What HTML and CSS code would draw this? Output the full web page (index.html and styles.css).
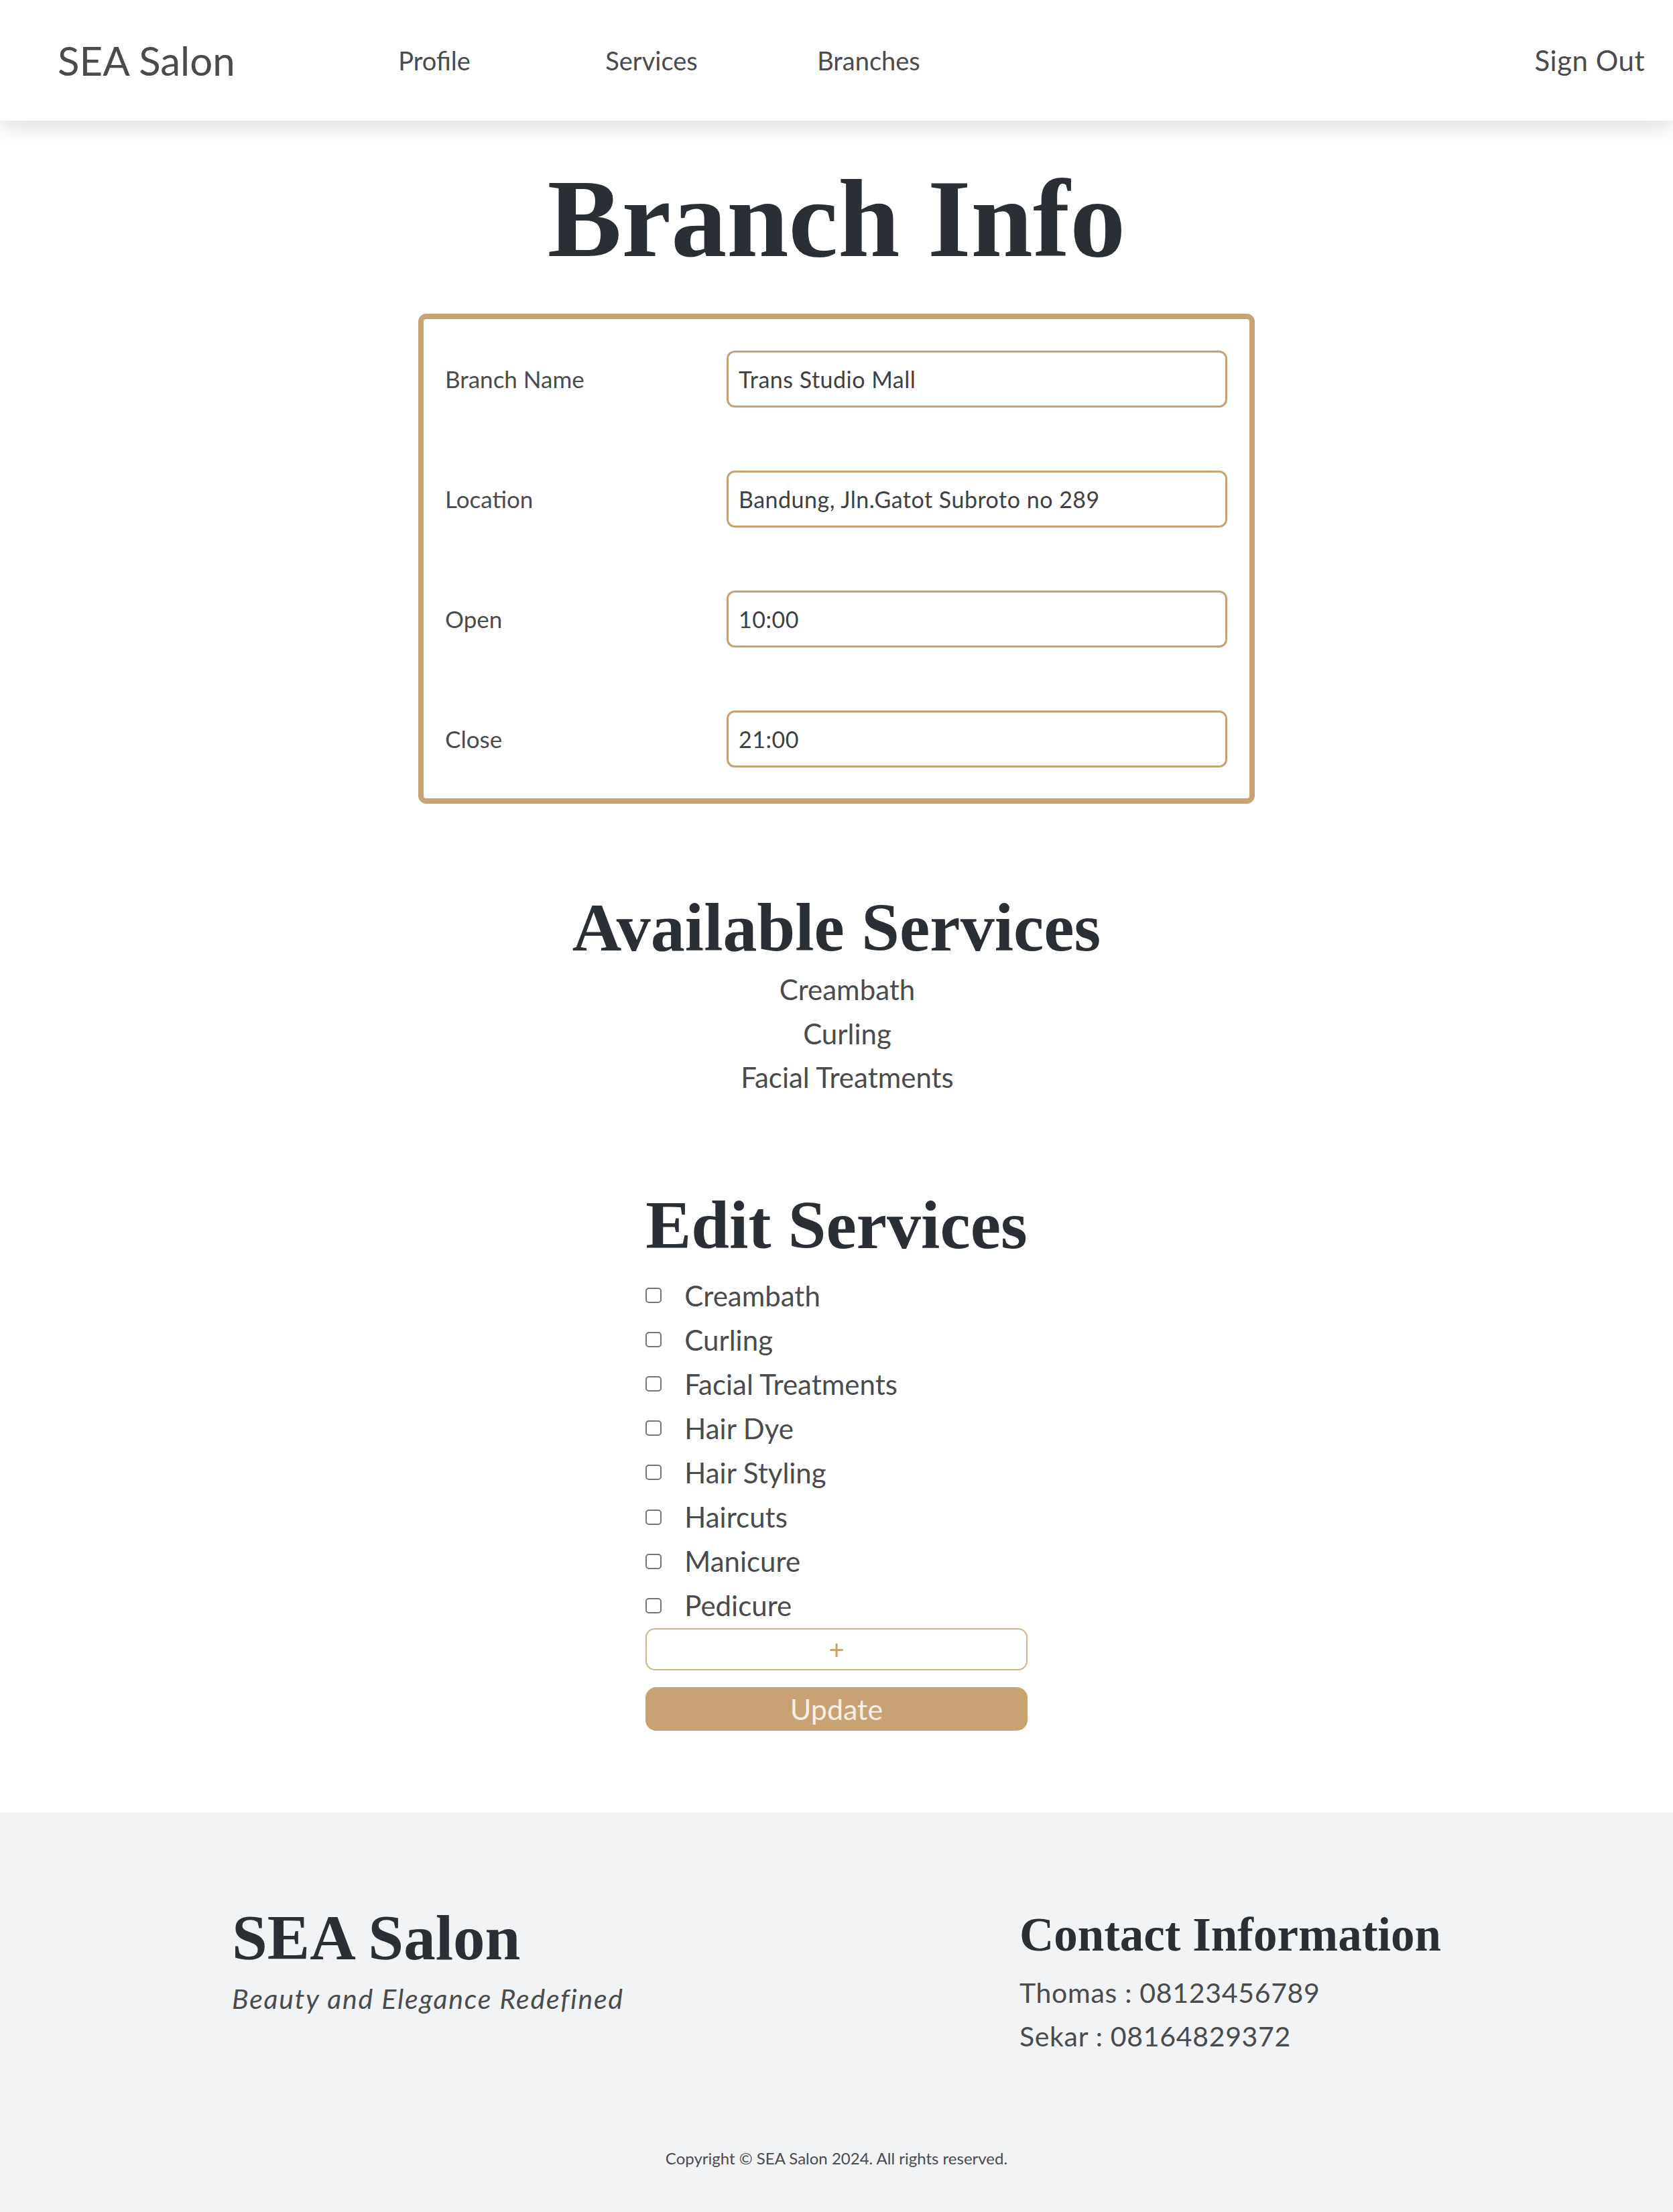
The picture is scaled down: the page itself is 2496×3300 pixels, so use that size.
FILE: index.html
```html
<!DOCTYPE html>
<html lang="en">
<head>
<meta charset="utf-8">
<title>SEA Salon - Branch Info</title>
<link rel="stylesheet" href="styles.css">
</head>
<body>
<header class="nav">
  <div class="nav-logo">SEA Salon</div>
  <nav class="nav-links">
    <a class="nav-link" href="#">Profile</a>
    <a class="nav-link" href="#">Services</a>
    <a class="nav-link" href="#">Branches</a>
  </nav>
  <a class="nav-signout" href="#">Sign Out</a>
</header>

<main class="main">
  <h1 class="page-title">Branch Info</h1>

  <form class="info-card">
    <div class="info-row">
      <label class="info-label">Branch Name</label>
      <input class="info-input" type="text" value="Trans Studio Mall">
    </div>
    <div class="info-row">
      <label class="info-label">Location</label>
      <input class="info-input" type="text" value="Bandung, Jln.Gatot Subroto no 289">
    </div>
    <div class="info-row">
      <label class="info-label">Open</label>
      <input class="info-input" type="text" value="10:00">
    </div>
    <div class="info-row">
      <label class="info-label">Close</label>
      <input class="info-input" type="text" value="21:00">
    </div>
  </form>

  <section class="available">
    <h2 class="section-title">Available Services</h2>
    <ul class="available-list">
      <li>Creambath</li>
      <li>Curling</li>
      <li>Facial Treatments</li>
    </ul>
  </section>

  <section class="edit">
    <div class="edit-inner">
      <h2 class="section-title">Edit Services</h2>
      <ul class="edit-list">
        <li class="edit-item"><input class="edit-check" type="checkbox"><span>Creambath</span></li>
        <li class="edit-item"><input class="edit-check" type="checkbox"><span>Curling</span></li>
        <li class="edit-item"><input class="edit-check" type="checkbox"><span>Facial Treatments</span></li>
        <li class="edit-item"><input class="edit-check" type="checkbox"><span>Hair Dye</span></li>
        <li class="edit-item"><input class="edit-check" type="checkbox"><span>Hair Styling</span></li>
        <li class="edit-item"><input class="edit-check" type="checkbox"><span>Haircuts</span></li>
        <li class="edit-item"><input class="edit-check" type="checkbox"><span>Manicure</span></li>
        <li class="edit-item"><input class="edit-check" type="checkbox"><span>Pedicure</span></li>
      </ul>
      <button class="add-btn" type="button">+</button>
      <button class="update-btn" type="button">Update</button>
    </div>
  </section>
</main>

<footer class="footer">
  <div class="footer-top">
    <div class="footer-brand">
      <div class="footer-logo">SEA Salon</div>
      <div class="footer-tagline">Beauty and Elegance Redefined</div>
    </div>
    <div class="footer-contact">
      <div class="footer-contact-title">Contact Information</div>
      <div class="footer-contact-line">Thomas : 08123456789</div>
      <div class="footer-contact-line">Sekar : 08164829372</div>
    </div>
  </div>
  <div class="footer-copy">Copyright © SEA Salon 2024. All rights reserved.</div>
</footer>
</body>
</html>
```

FILE: styles.css
```css
* {
  box-sizing: border-box;
}

html, body {
  margin: 0;
  padding: 0;
}

body {
  background: #ffffff;
  font-family: "Lato", "Open Sans", sans-serif;
  color: #4a4b4d;
}

/* NAV */
.nav {
  height: 180px;
  display: flex;
  align-items: center;
  padding: 0 42px 0 86px;
  background: #ffffff;
  box-shadow: 0 10px 30px rgba(0, 0, 0, 0.13);
  position: relative;
  z-index: 2;
}

.nav-logo {
  width: 400px;
  flex: none;
  font-size: 60px;
  color: #4a4b4d;
}

.nav-links {
  display: flex;
}

.nav-link {
  width: 324px;
  text-align: center;
  font-size: 38px;
  color: #4a4b4d;
  text-decoration: none;
}

.nav-signout {
  margin-left: auto;
  font-size: 42px;
  letter-spacing: 0.5px;
  color: #4a4b4d;
  text-decoration: none;
}

/* MAIN */
.main {
  display: flex;
  flex-direction: column;
  align-items: center;
}

.page-title {
  margin: 63px 0 59px;
  font-family: "Liberation Serif", serif;
  font-weight: 700;
  font-size: 166px;
  line-height: 166px;
  color: #2a2f35;
}

.info-card {
  width: 50%;
  border: 8px solid #c8a273;
  border-radius: 12px;
  padding: 47px 33px 46px 32px;
  display: grid;
  row-gap: 94px;
}

.info-row {
  display: grid;
  grid-template-columns: 420px 1fr;
  align-items: center;
}

.info-label {
  font-size: 35px;
  color: #4a4b4d;
  position: relative;
  top: -1px;
}

.info-input {
  height: 85px;
  width: 100%;
  border: 3px solid #c8a273;
  border-radius: 12px;
  padding: 0 15px;
  font-family: "Lato", "Open Sans", sans-serif;
  font-size: 34px;
  letter-spacing: 0.5px;
  color: #3f4043;
  background: #ffffff;
  outline: none;
}

.section-title {
  margin: 0;
  font-family: "Liberation Serif", serif;
  font-weight: 700;
  font-size: 102px;
  line-height: 102px;
  color: #2a2f35;
  text-align: center;
}

.available {
  margin-top: 134px;
  display: flex;
  flex-direction: column;
  align-items: center;
}

.available-list {
  list-style: none;
  margin: 9px 0 0;
  padding: 0 0 0 32px;
  text-align: center;
  font-size: 42px;
  line-height: 65.5px;
}

.edit {
  margin-top: 136px;
}

.edit-inner {
  display: flex;
  flex-direction: column;
  width: max-content;
}

.edit-list {
  list-style: none;
  margin: 21px 0 0;
  padding: 0;
}

.edit-item {
  display: flex;
  align-items: center;
  height: 66.1px;
  font-size: 42px;
}

.edit-check {
  appearance: none;
  -webkit-appearance: none;
  width: 24px;
  height: 23px;
  margin: 0 34px 0 0;
  border: 2px solid #767676;
  border-radius: 5px;
  background: #ffffff;
}

.add-btn {
  margin-top: 1px;
  height: 63px;
  border: 2px solid #d2b48c;
  border-radius: 14px;
  background: #ffffff;
  color: #c8a273;
  font-family: "Lato", "Open Sans", sans-serif;
  font-size: 40px;
  line-height: 1;
  padding: 0;
}

.update-btn {
  margin-top: 25px;
  height: 65px;
  border: none;
  border-radius: 16px;
  background: #c8a273;
  color: #f7efe6;
  font-family: "Lato", "Open Sans", sans-serif;
  font-size: 43px;
  padding: 0;
}

/* FOOTER */
.footer {
  margin-top: 122px;
  background: #f2f3f5;
  padding: 140px 346px 62px;
}

.footer-top {
  display: flex;
  justify-content: space-between;
  align-items: flex-start;
}

.footer-logo {
  font-family: "Liberation Serif", serif;
  font-weight: 700;
  font-size: 95px;
  line-height: 95px;
  color: #2a2f35;
}

.footer-tagline {
  margin-top: 13px;
  font-style: italic;
  font-size: 41px;
  letter-spacing: 1.8px;
  line-height: 60px;
  color: #4a4b4d;
}

.footer-contact {
  margin-top: 7px;
}

.footer-contact-title {
  font-family: "Liberation Serif", serif;
  font-weight: 700;
  font-size: 71px;
  line-height: 71px;
  color: #2a2f35;
  margin-bottom: 18px;
}

.footer-contact-line {
  font-size: 41px;
  letter-spacing: 0.7px;
  line-height: 65px;
  color: #4a4b4d;
}

.footer-copy {
  margin-top: 133px;
  text-align: center;
  font-size: 24px;
  line-height: 34.5px;
  color: #4a4b4d;
}
```
